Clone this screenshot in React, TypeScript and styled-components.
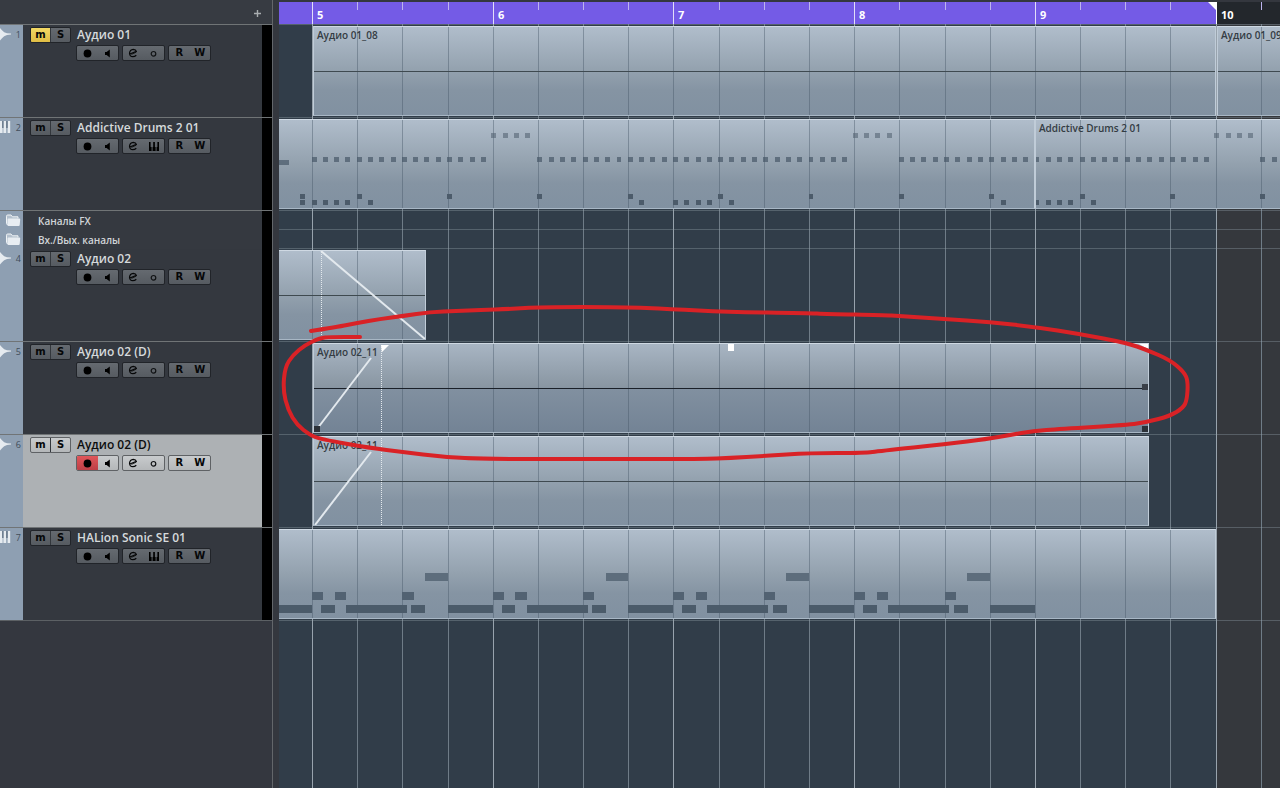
import React from "react";
import styled, { createGlobalStyle, css } from "styled-components";

const FONT = '"Open Sans", "Noto Sans", sans-serif';
const BEAT = 45.18;
const ORIGIN = 33.5;
const beatX = (beat: number) => Math.floor(ORIGIN + beat * BEAT);

const LOOP_END = 20;
const BEATS = Array.from({ length: 24 }, (_, i) => i);

const Global = createGlobalStyle`
  *, *::before, *::after { box-sizing: border-box; }
  body { margin: 0; background: #34373e; font-family: ${FONT}; }
  button { font: inherit; margin: 0; padding: 0; border: 0; background: none; color: inherit; }
  h2, ul { margin: 0; padding: 0; font: inherit; list-style: none; }
`;

const Page = styled.div`
  display: flex;
  min-height: 100vh;
  overflow: hidden;
`;

/* ---------- track list ---------- */

const TrackPanel = styled.aside`
  display: flex;
  flex-direction: column;
  flex: 0 0 273px;
  border-right: 1px solid #63666a;
  background: #34373f;
`;

const PanelHeader = styled.header`
  display: flex;
  justify-content: flex-end;
  align-items: center;
  height: 24px;
  padding: 3px 10px 0 0;
  background: #373b42;
`;

const AddButton = styled.button`
  display: grid;
  place-items: center;
  width: 9px;
  height: 9px;
`;

const TrackItem = styled.li<{ $folder?: boolean }>`
  display: grid;
  grid-template-columns: 23px 1fr 10px;
  height: ${(p) => (p.$folder ? 19 : 93)}px;
  border-top: 1px solid #707476;
`;

const TrackEnd = styled.div`
  border-top: 1px solid #5c6064;
`;

const Strip = styled.div`
  display: flex;
  justify-content: space-between;
  align-items: flex-start;
  padding: 3px 2px 0 0;
  background: #8e9fb2;
  color: #414d5a;
  font-size: 9px;
  line-height: 13px;
`;

const FolderStrip = styled(Strip)`
  justify-content: flex-end;
`;

const Meter = styled.div`
  background: #000;
`;

const TrackBody = styled.div<{ $selected?: boolean }>`
  display: flex;
  align-items: flex-start;
  gap: 5px;
  padding: 2px 0 0 7px;
  background: ${(p) => (p.$selected ? "#adb1b4" : "#34383f")};
  color: ${(p) => (p.$selected ? "#0c0d0e" : "#d6dadc")};
`;

const FolderBody = styled.div`
  padding-left: 15px;
  background: #353940;
  color: #d0d4d7;
  font-size: 10px;
  font-weight: 600;
  line-height: 20px;
`;

const TrackMain = styled.div`
  display: flex;
  flex-direction: column;
  gap: 2px;
`;

const TrackName = styled.h2`
  padding-left: 1px;
  font-size: 12px;
  font-weight: 600;
  line-height: 16px;
  white-space: nowrap;
`;

const Controls = styled.div`
  display: flex;
  gap: 3px;
`;

const ButtonGroup = styled.div<{ $selected?: boolean; $narrow?: boolean }>`
  display: flex;
  width: ${(p) => (p.$narrow ? 41 : 43)}px;
  height: 16px;
  border: 1px solid ${(p) => (p.$selected ? "#5f6265" : "#212429")};
  border-radius: 2px;
  overflow: hidden;
  background: ${(p) =>
    p.$selected
      ? "linear-gradient(#c8cbcd, #b4b7b9)"
      : "linear-gradient(#656a70, #565b61)"};
  color: #060708;
`;

const tones = {
  mute: css`background: linear-gradient(#f3d964, #dfbd45);`,
  record: css`background: linear-gradient(#e0565a, #bd3f46);`,
};

const ControlButton = styled.button<{ $tone?: "mute" | "record"; $split?: boolean }>`
  display: grid;
  place-items: center;
  flex: 1;
  font-family: "DejaVu Sans", sans-serif;
  font-size: 10px;
  font-weight: 700;
  line-height: 14px;
  ${(p) => p.$split && css`border-left: 1px solid #33373c;`}
  ${(p) => p.$tone && tones[p.$tone]}
`;

/* ---------- arrangement ---------- */

const Arrange = styled.main`
  position: relative;
  flex: 1;
  min-width: 0;
  margin-left: 6px;
  overflow: hidden;
  background: #313d49;
`;

const OutsideLoop = styled.div`
  position: absolute;
  inset: 0 0 0 auto;
  background: #35383d;
`;

const GridLine = styled.i<{ $bar: boolean }>`
  position: absolute;
  top: 0;
  bottom: 0;
  width: 1px;
  background: ${(p) => (p.$bar ? "#98a3ad" : "#6f7c87")};
`;

const Ruler = styled.div`
  position: relative;
  height: 24px;
  border-top: 2px solid #34373e;
  background: #23272c;
`;

const LoopRange = styled.div`
  height: 22px;
  background: #745be6;
`;

const Tick = styled.i<{ $bar: boolean }>`
  position: absolute;
  top: 0;
  width: 1px;
  height: ${(p) => (p.$bar ? 22 : 8)}px;
  background: ${(p) => (p.$bar ? "#e2def8" : "#bdb4ee")};
`;

const BarNumber = styled.span`
  position: absolute;
  top: 5px;
  padding-left: 5px;
  color: #fff;
  font-size: 11px;
  font-weight: 700;
  line-height: 16px;
`;

const LoopFlag = styled.svg`
  position: absolute;
  top: 0;
`;

const Lane = styled.section<{ $folder?: boolean }>`
  position: relative;
  height: ${(p) => (p.$folder ? 19 : 93)}px;
  border-top: 1px solid rgba(150, 163, 172, 0.36);
`;

const LaneEnd = styled.div`
  position: relative;
  border-top: 1px solid rgba(150, 163, 172, 0.36);
`;

const ClipBox = styled.article<{ $selected?: boolean; $openLeft?: boolean }>`
  position: absolute;
  top: 1px;
  height: 90px;
  overflow: hidden;
  border: 1px solid #c0ccd8;
  border-top-color: #cfd9e3;
  border-bottom-color: #a8b7c5;
  ${(p) => p.$openLeft && css`border-left: 0;`}
  background: ${(p) =>
    p.$selected
      ? "linear-gradient(#a8b5c3, #8996a2 49%, #8190a0 51%, #738395)"
      : "linear-gradient(#b0bdcb, #93a1ae 50%, #8594a3 72%, #8191a1)"};
`;

const ClipLine = styled.i`
  position: absolute;
  top: 0;
  bottom: 0;
  width: 1px;
  background: rgba(70, 86, 102, 0.42);
`;

const Centre = styled.i<{ $selected?: boolean }>`
  position: absolute;
  inset: 44px 0 auto 0;
  height: 1px;
  background: ${(p) => (p.$selected ? "#1a2028" : "#3f4a50")};
`;

const ClipLabel = styled.span`
  position: absolute;
  top: 1px;
  left: 3px;
  color: #343c43;
  font-size: 10px;
  font-weight: 600;
  line-height: 14px;
  white-space: nowrap;
`;

const ClipArt = styled.svg`
  position: absolute;
  top: -1px;
  left: 0;
  overflow: visible;
`;

const Marker = styled.svg`
  position: absolute;
  top: 0;
  left: 0;
  width: 100%;
  height: 100%;
  pointer-events: none;
`;

/* ---------- icons ---------- */

const PlusIcon = () => (
  <svg width="9" height="9" viewBox="0 0 9 9">
    <path d="M4.5 1v7M1 4.5h7" stroke="#a9adb0" strokeWidth="1.4" />
  </svg>
);
const WaveIcon = () => (
  <svg width="11" height="13" viewBox="0 0 11 13">
    <path d="M0 0L2 2.2L4.2 4.2L7 5.2L11 5.6V6.4L7 7L4.2 8.2L2 10.2L0 12.4Z" fill="#e6ebf0" />
  </svg>
);
const KeysIcon = () => (
  <svg width="11" height="13" viewBox="0 0 11 13">
    <path d="M0 0h2v7H0zM3.4 0h2.8v12H3.4zM0 7h2.6v5H0zM7.6 0h2.6v12H7.6z" fill="#e6ebf0" />
    <path d="M2 0h1.6v7H2zM6 0h1.8v7H6z" fill="#6f7f91" />
  </svg>
);
const FolderIcon = () => (
  <svg width="16" height="13" viewBox="0 0 16 13">
    <path d="M2.5 11L1.5 9.6V2.2Q1.5 1 2.7 1H6l1.4 1.8H13V4.5" fill="#b4c0cd" stroke="#eff3f6" />
    <path d="M2.6 5.3Q2.5 4.5 3.5 4.5H14.4Q15.3 4.5 15.2 5.3L14.7 11Q14.6 12 13.7 12H3.4Q2.5 12 2.4 11Z" fill="#e8edf2" />
  </svg>
);
const RecordIcon = () => (
  <svg width="9" height="9" viewBox="0 0 9 9"><circle cx="4.5" cy="4.5" r="3.9" /></svg>
);
const SpeakerIcon = () => (
  <svg width="9" height="9" viewBox="0 0 9 9">
    <path d="M2 2.9H3.6L6.8 .4V8.6L3.6 6.1H2Z" />
  </svg>
);
const EditIcon = () => (
  <svg width="10" height="10" viewBox="0 0 10 10" fill="none" stroke="#060708" strokeWidth="1.2">
    <path d="M1.2 6.2L8.4 3.4Q7.8 1.3 5.3 1.3Q1.8 1.6 1.5 5.2Q1.8 8.6 4.8 8.6Q6.8 8.6 8.3 7.2" />
    <path d="M3.4 6.4L8.3 4.2" strokeWidth="0.8" />
  </svg>
);
const MonoIcon = () => (
  <svg width="7" height="7" viewBox="0 0 7 7" fill="none" stroke="#101214" strokeWidth="1.2">
    <circle cx="3.5" cy="3.8" r="2.3" />
  </svg>
);
const PianoIcon = () => (
  <svg width="12" height="9" viewBox="0 0 12 9">
    <path d="M1 0h1.6v5h1v4H1zM4.6 5h.6V0h1.7v5h.7V9H4.6zM8.6 5h.8V0H11v9H8.6z" />
  </svg>
);

/* ---------- data ---------- */

type Note = { y: number; h: number; from: number; to: number; tone: string };
type Fade = { guide: number; line: [number, number, number, number] };
type Clip = {
  id: string;
  label?: string;
  from: number;
  to: number;
  audio?: boolean;
  selected?: boolean;
  openLeft?: boolean;
  fade?: Fade;
  notes?: Note[];
};
type Track = {
  id: string;
  name: string;
  number?: number;
  kind: "audio" | "midi" | "folder";
  muted?: boolean;
  selected?: boolean;
  clips: Clip[];
};

const range = (from: number, to: number) => {
  const out: number[] = [];
  for (let b = from; b < to; b += 0.25) out.push(b);
  return out;
};
const hits = (beats: number[], y: number, tone: string, early = 0.01): Note[] =>
  beats.map((b) => ({ y, h: 5, from: b - early, to: b - early + 0.11, tone }));

const HAT = "rgba(70, 86, 102, 0.68)";
const CRASH = "rgba(85, 100, 115, 0.6)";
const KICK = "#4c5b6a";

const drumsA: Note[] = [
  { y: 41, h: 5, from: -1, to: -0.51, tone: HAT },
  ...hits([...range(0, 4), ...range(5, 12), ...range(13, 16)], 38, HAT),
  ...hits([...range(4, 5), ...range(12, 13)], 14, CRASH, 0.03),
  ...hits([-0.25, 1, 3, 5, 7, 9, 11, 13, 15], 75, KICK),
  ...hits([-0.25, 0, 0.25, 0.5, 0.75, 1.25, 7.25, 8, 8.25, 8.5, 8.75, 9.25, 15.25], 81, KICK),
];
const drumsB: Note[] = [
  ...hits([...range(16, 20), ...range(21, 22)], 38, HAT),
  ...hits(range(20, 21), 14, CRASH, 0.03),
  ...hits([17, 19, 21], 75, KICK),
  ...hits([16, 16.25, 16.5, 16.75, 17.25], 81, KICK),
];

const phrase = (b: number): Note[] => [
  { y: 44, h: 8, from: b + 2.5, to: b + 3, tone: "#5d6d7c" },
  ...[[0, 0.24], [0.5, 0.75], [2, 2.25]].map(([s, e]) => ({ y: 63, h: 8, from: b + s, to: b + e, tone: "#526272" })),
  ...[[0.2, 0.5], [0.75, 2.1], [2.2, 2.51], [3, 4]].map(([s, e]) => ({ y: 76, h: 8, from: b + s, to: b + e, tone: "#4b5b6a" })),
];
const bass: Note[] = [
  { y: 76, h: 8, from: -1, to: 0, tone: "#4b5b6a" },
  ...[0, 4, 8, 12].flatMap(phrase),
];

const TRACKS: Track[] = [
  {
    id: "t1", name: "Аудио 01", number: 1, kind: "audio", muted: true,
    clips: [
      { id: "c1", label: "Аудио 01_08", from: 0, to: 20, audio: true },
      { id: "c2", label: "Аудио 01_09", from: 20, to: 24, audio: true },
    ],
  },
  {
    id: "t2", name: "Addictive Drums 2 01", number: 2, kind: "midi",
    clips: [
      { id: "c3", from: -1, to: 16, openLeft: true, notes: drumsA },
      { id: "c4", label: "Addictive Drums 2 01", from: 16, to: 24, notes: drumsB },
    ],
  },
  { id: "fx", name: "Каналы FX", kind: "folder", clips: [] },
  { id: "io", name: "Вх./Вых. каналы", kind: "folder", clips: [] },
  {
    id: "t4", name: "Аудио 02", number: 4, kind: "audio",
    clips: [{ id: "c5", from: -1, to: 2.5, audio: true, openLeft: true, fade: { guide: 42, line: [42, 1, 146, 89] } }],
  },
  {
    id: "t5", name: "Аудио 02 (D)", number: 5, kind: "audio",
    clips: [{ id: "c6", label: "Аудио 02_11", from: 0, to: 18.51, audio: true, selected: true, fade: { guide: 67, line: [3, 86, 57, 15] } }],
  },
  {
    id: "t6", name: "Аудио 02 (D)", number: 6, kind: "audio", selected: true,
    clips: [{ id: "c7", label: "Аудио 02_11", from: 0, to: 18.51, audio: true, fade: { guide: 67, line: [1, 89, 57, 16] } }],
  },
  {
    id: "t7", name: "HALion Sonic SE 01", number: 7, kind: "midi",
    clips: [{ id: "c8", from: -1, to: 20, openLeft: true, notes: bass }],
  },
];

/* Pen annotation, as points in the arrangement area. */
const PEN: [number, number][] = [
  [32, 331], [58, 327], [78, 323], [101, 319], [124, 316], [151, 312], [178, 311], [201, 310], [231, 309],
  [261, 307], [344, 307], [391, 309], [448, 312], [528, 313], [548, 314], [604, 315], [621, 316], [664, 319],
  [711, 322], [756, 327], [801, 334], [848, 343], [868, 350], [891, 360], [905, 372], [909, 381], [908, 400],
  [904, 408], [891, 416], [868, 422], [848, 425], [781, 429], [754, 431], [731, 435], [708, 439], [668, 444],
  [601, 451], [586, 453], [531, 453], [484, 456], [451, 458], [424, 459], [321, 459], [208, 459], [164, 457],
  [124, 452], [91, 448], [41, 439], [31, 435], [18, 425], [9, 410], [4, 390], [6, 367], [14, 355], [26, 345],
  [41, 338], [51, 337], [81, 337],
];
const smooth = (pts: [number, number][]) => {
  let d = `M${pts[0][0]} ${pts[0][1]}`;
  for (let i = 1; i < pts.length - 1; i++) {
    const [x, y] = pts[i];
    const [nx, ny] = pts[i + 1];
    d += `Q${x} ${y} ${(x + nx) / 2} ${(y + ny) / 2}`;
  }
  const last = pts[pts.length - 1];
  return `${d}L${last[0]} ${last[1]}`;
};

/* ---------- parts ---------- */

function TrackRow({ track }: { track: Track }) {
  if (track.kind === "folder") {
    return (
      <TrackItem $folder>
        <FolderStrip><FolderIcon /></FolderStrip>
        <FolderBody>{track.name}</FolderBody>
        <Meter />
      </TrackItem>
    );
  }
  const sel = track.selected;
  return (
    <TrackItem>
      <Strip>
        {track.kind === "audio" ? <WaveIcon /> : <KeysIcon />}
        <span>{track.number}</span>
      </Strip>
      <TrackBody $selected={sel}>
        <ButtonGroup $selected={sel} $narrow>
          <ControlButton type="button" aria-label="Mute" $tone={track.muted ? "mute" : undefined}>m</ControlButton>
          <ControlButton type="button" aria-label="Solo" $split>S</ControlButton>
        </ButtonGroup>
        <TrackMain>
          <TrackName>{track.name}</TrackName>
          <Controls>
            <ButtonGroup $selected={sel}>
              <ControlButton type="button" aria-label="Record" $tone={sel ? "record" : undefined}><RecordIcon /></ControlButton>
              <ControlButton type="button" aria-label="Monitor"><SpeakerIcon /></ControlButton>
            </ButtonGroup>
            <ButtonGroup $selected={sel}>
              <ControlButton type="button" aria-label="Edit"><EditIcon /></ControlButton>
              <ControlButton type="button" aria-label="Channel">
                {track.kind === "audio" ? <MonoIcon /> : <PianoIcon />}
              </ControlButton>
            </ButtonGroup>
            <ButtonGroup $selected={sel}>
              <ControlButton type="button" aria-label="Read">R</ControlButton>
              <ControlButton type="button" aria-label="Write">W</ControlButton>
            </ButtonGroup>
          </Controls>
        </TrackMain>
      </TrackBody>
      <Meter />
    </TrackItem>
  );
}

function ClipView({ clip }: { clip: Clip }) {
  const left = clip.openLeft ? 0 : beatX(clip.from) + (clip.audio ? 1 : 0);
  const width = beatX(clip.to) - left + (clip.audio && clip.to < LOOP_END ? 1 : 0);
  const inner = left + (clip.openLeft ? 0 : 1);
  return (
    <ClipBox $selected={clip.selected} $openLeft={clip.openLeft} style={{ left, width }}>
      {BEATS.filter((b) => beatX(b) > left && beatX(b) < left + width - 1).map((b) => (
        <ClipLine key={b} style={{ left: beatX(b) - inner }} />
      ))}
      {clip.audio && <Centre $selected={clip.selected} />}
      <ClipArt width={width} height="90">
        {clip.notes?.map((n, i) => {
          const x = Math.max(0, beatX(n.from));
          return <rect key={i} x={x - inner} y={n.y} width={beatX(n.to) - x} height={n.h} fill={n.tone} />;
        })}
        {clip.fade && (
          <g fill="none" stroke="#e3e9ee">
            <path d={`M${clip.fade.guide + 0.5} 2V89`} strokeDasharray="1 1" />
            <path
              d={`M${clip.fade.line[0]} ${clip.fade.line[1]}L${clip.fade.line[2]} ${clip.fade.line[3]}`}
              strokeWidth="2"
            />
          </g>
        )}
        {clip.selected && (
          <g>
            <path d={`M67 2H75L68 9ZM${width - 11} 1H${width - 2}V6Z`} fill="#fff" />
            <rect x="414" y="1" width="6" height="7" fill="#fff" />
            <rect x="0" y="83" width="6" height="6" fill="#2c3138" />
            <rect x={width - 8} y="41" width="6" height="6" fill="#3a4048" />
            <rect x={width - 8} y="83" width="6" height="6" fill="#2c3138" />
          </g>
        )}
      </ClipArt>
      {clip.label && <ClipLabel>{clip.label}</ClipLabel>}
    </ClipBox>
  );
}

export default function App() {
  return (
    <Page>
      <Global />
      <TrackPanel>
        <PanelHeader>
          <AddButton type="button" aria-label="Add track"><PlusIcon /></AddButton>
        </PanelHeader>
        <ul>
          {TRACKS.map((t) => <TrackRow key={t.id} track={t} />)}
        </ul>
        <TrackEnd />
      </TrackPanel>
      <Arrange>
        <OutsideLoop style={{ left: beatX(LOOP_END) }} />
        {BEATS.map((b) => <GridLine key={b} $bar={b % 4 === 0} style={{ left: beatX(b) }} />)}
        <Ruler>
          <LoopRange style={{ width: beatX(LOOP_END) }} />
          {BEATS.map((b) => <Tick key={b} $bar={b % 4 === 0} style={{ left: beatX(b) }} />)}
          {BEATS.filter((b) => b % 4 === 0).map((b) => (
            <BarNumber key={b} style={{ left: beatX(b) }}>{5 + b / 4}</BarNumber>
          ))}
          <LoopFlag width="9" height="22" style={{ left: beatX(LOOP_END) - 8 }}>
            <path d="M0 0H9V22H8V8Z" fill="#fff" />
          </LoopFlag>
        </Ruler>
        {TRACKS.map((t) => (
          <Lane key={t.id} $folder={t.kind === "folder"} aria-label={t.name}>
            {t.clips.map((c) => <ClipView key={c.id} clip={c} />)}
          </Lane>
        ))}
        <LaneEnd />
        <Marker aria-hidden="true">
          <path d={smooth(PEN)} fill="none" stroke="#d92226" strokeWidth="4" strokeLinecap="round" strokeLinejoin="round" />
        </Marker>
      </Arrange>
    </Page>
  );
}
